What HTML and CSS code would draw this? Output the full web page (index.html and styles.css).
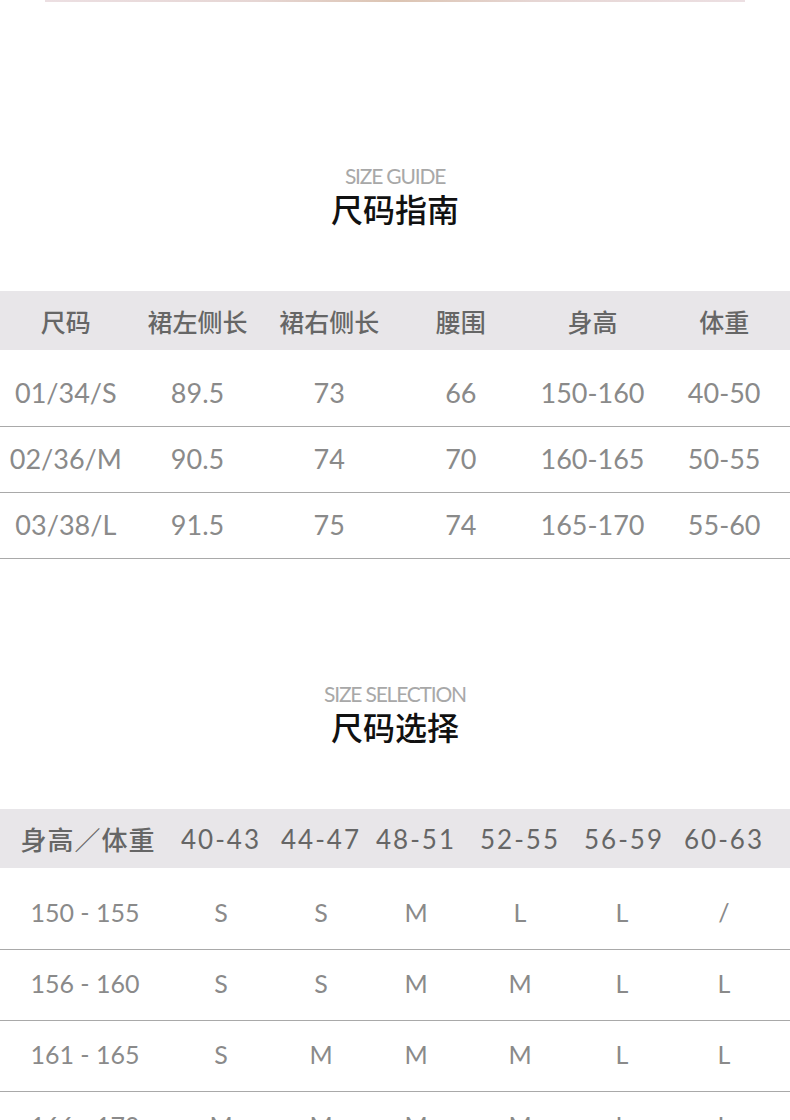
FILE: index.html
```html
<!DOCTYPE html>
<html lang="zh-CN">
<head>
<meta charset="utf-8">
<title>尺码指南</title>
<link rel="stylesheet" href="styles.css">
</head>
<body>
<div class="page">
  <div class="topline"></div>

  <section class="section guide">
    <div class="title">
      <div class="title-en">SIZE GUIDE</div>
      <div class="title-cn">尺码指南</div>
    </div>
    <div class="table t1">
      <div class="row head">
        <div class="cell">尺码</div>
        <div class="cell">裙左侧长</div>
        <div class="cell">裙右侧长</div>
        <div class="cell">腰围</div>
        <div class="cell">身高</div>
        <div class="cell">体重</div>
      </div>
      <div class="body">
        <div class="row">
          <div class="cell">01/34/S</div>
          <div class="cell">89.5</div>
          <div class="cell">73</div>
          <div class="cell">66</div>
          <div class="cell">150-160</div>
          <div class="cell">40-50</div>
        </div>
        <div class="row">
          <div class="cell">02/36/M</div>
          <div class="cell">90.5</div>
          <div class="cell">74</div>
          <div class="cell">70</div>
          <div class="cell">160-165</div>
          <div class="cell">50-55</div>
        </div>
        <div class="row">
          <div class="cell">03/38/L</div>
          <div class="cell">91.5</div>
          <div class="cell">75</div>
          <div class="cell">74</div>
          <div class="cell">165-170</div>
          <div class="cell">55-60</div>
        </div>
      </div>
    </div>
  </section>

  <section class="section selection">
    <div class="title">
      <div class="title-en">SIZE SELECTION</div>
      <div class="title-cn">尺码选择</div>
    </div>
    <div class="table t2">
      <div class="row head">
        <div class="cell first">身高／体重</div>
        <div class="cell">40-43</div>
        <div class="cell">44-47</div>
        <div class="cell">48-51</div>
        <div class="cell">52-55</div>
        <div class="cell">56-59</div>
        <div class="cell">60-63</div>
      </div>
      <div class="body">
        <div class="row">
          <div class="cell first">150 - 155</div>
          <div class="cell">S</div>
          <div class="cell">S</div>
          <div class="cell">M</div>
          <div class="cell">L</div>
          <div class="cell">L</div>
          <div class="cell">/</div>
        </div>
        <div class="row">
          <div class="cell first">156 - 160</div>
          <div class="cell">S</div>
          <div class="cell">S</div>
          <div class="cell">M</div>
          <div class="cell">M</div>
          <div class="cell">L</div>
          <div class="cell">L</div>
        </div>
        <div class="row">
          <div class="cell first">161 - 165</div>
          <div class="cell">S</div>
          <div class="cell">M</div>
          <div class="cell">M</div>
          <div class="cell">M</div>
          <div class="cell">L</div>
          <div class="cell">L</div>
        </div>
        <div class="row">
          <div class="cell first">166 - 170</div>
          <div class="cell">M</div>
          <div class="cell">M</div>
          <div class="cell">M</div>
          <div class="cell">M</div>
          <div class="cell">L</div>
          <div class="cell">L</div>
        </div>
      </div>
    </div>
  </section>
</div>
</body>
</html>
```

FILE: styles.css
```css
html, body {
  margin: 0;
  padding: 0;
  background: #ffffff;
}

body {
  font-family: Lato, "Noto Sans CJK SC", sans-serif;
  width: 790px;
  overflow: hidden;
}

.page {
  width: 790px;
}

.topline {
  height: 2px;
  margin: 0 45px;
  background: linear-gradient(90deg, #ecdfe2 0%, #e6d6d4 30%, #dcc4b2 50%, #e6d6d4 70%, #ecdfe2 100%);
}

.section.guide {
  padding-top: 161px;
}

.section.selection {
  padding-top: 122px;
}

.title {
  display: flex;
  flex-direction: column;
  align-items: center;
}

.title-en {
  font-family: Lato, sans-serif;
  font-size: 21px;
  line-height: 26px;
  color: #a8a8a8;
  letter-spacing: -1.2px;
}

.title-cn {
  font-family: "Noto Sans CJK SC", sans-serif;
  font-size: 32px;
  line-height: 46px;
  color: #111111;
  margin-top: -4px;
  font-weight: 500;
}

.table {
  margin-top: 60px;
}

.row {
  display: grid;
  align-items: center;
}

.t1 .row {
  grid-template-columns: repeat(6, 1fr);
}

.t2 .row {
  grid-template-columns: 176px 90px 110px 80px 128px 76px 128px 2px;
}

.cell {
  text-align: center;
  white-space: nowrap;
}

.row.head {
  background: #e8e6e9;
  height: 59px;
  color: #666666;
  font-family: "Noto Sans CJK SC", sans-serif;
  font-weight: 500;
}

.t1 .row.head {
  font-size: 25px;
}

.t2 .row.head {
  font-size: 26px;
  letter-spacing: 2px;
  font-family: Lato, "Noto Sans CJK SC", sans-serif;
  font-weight: 400;
}

.t2 .row.head .first {
  font-family: "Noto Sans CJK SC", sans-serif;
  letter-spacing: 1px;
  font-weight: 500;
}

.body {
  padding-top: 11px;
}

.body .row {
  border-bottom: 1px solid #a9a9a9;
  color: #8a8a8a;
  font-family: Lato, sans-serif;
  box-sizing: border-box;
}

.t1 .body .row {
  height: 66px;
  padding-bottom: 2px;
  font-size: 27px;
}

.t2 .body .row {
  height: 71px;
  padding-bottom: 5px;
  font-size: 25px;
}

.t2 .body .first {
  padding-right: 6px;
}
```
